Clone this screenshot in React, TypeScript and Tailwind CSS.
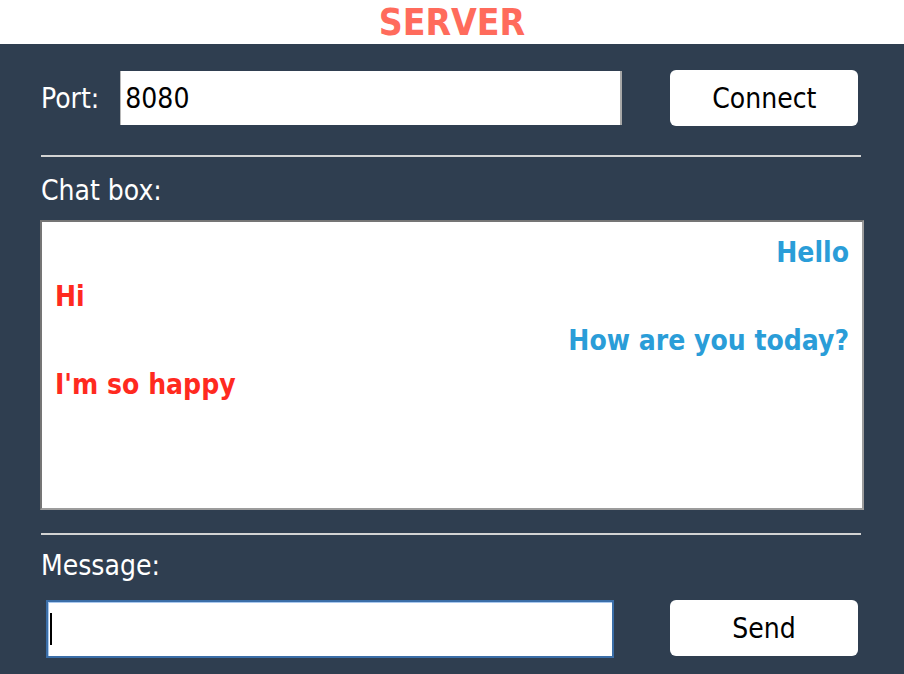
import React from 'react';

type Msg = { id: number; text: string; mine: boolean };

const messages: Msg[] = [
  { id: 1, text: 'Hello', mine: true },
  { id: 2, text: 'Hi', mine: false },
  { id: 3, text: 'How are you today?', mine: true },
  { id: 4, text: "I'm so happy", mine: false },
];

export default function App() {
  return (
    <div className="w-[904px] h-[674px] flex flex-col font-['DejaVu_Sans_Condensed','DejaVu_Sans',sans-serif]">
      {/* Title */}
      <div className="h-[44px] bg-white flex items-center justify-center">
        <h1 className="text-[37px] leading-[44px] pt-[1px] font-bold text-[#ff6b5c]">SERVER</h1>
      </div>

      <div className="flex-1 bg-[#2f3e50] px-[41px] flex flex-col">
        {/* Port row */}
        <div className="mt-[26px] h-[56px] flex items-center">
          <span className="text-white text-[28px] leading-[32px] pt-[2px]">Port:</span>
          <div className="ml-[21px] w-[502px] h-[54px] bg-white border-l border-r-2 border-l-[#b8b8b8] border-r-[#a8a8a8] flex items-center pl-[4px] pt-[2px]">
            <span className="text-black text-[28px] leading-[32px]">8080</span>
          </div>
          <button className="ml-[48px] w-[188px] h-[56px] pt-[2px] bg-white rounded-[6px] text-black text-[28px] leading-[32px]">
            Connect
          </button>
        </div>

        <div className="mt-[29px] h-[2px] w-[820px] bg-[#d3d3d3]" />

        {/* Chat box */}
        <div className="mt-[18px] text-white text-[28px] leading-[32px]">Chat box:</div>
        <div className="mt-[13px] -ml-[1px] w-[824px] h-[290px] bg-white border-2 border-t-[#757575] border-l-[#757575] border-r-[#9c9c9c] border-b-[#9c9c9c] pt-[9px] px-[13px] flex flex-col">
          {messages.map((m) => (
            <div
              key={m.id}
              className={
                m.mine
                  ? 'h-[44px] leading-[44px] text-[28px] font-bold text-right text-[#2a9dd8]'
                  : 'h-[44px] leading-[44px] text-[28px] font-bold text-left text-[#ff2a1f]'
              }
            >
              {m.text}
            </div>
          ))}
        </div>

        <div className="mt-[23px] h-[2px] w-[820px] bg-[#d3d3d3]" />

        {/* Message row */}
        <div className="mt-[15px] text-white text-[28px] leading-[32px]">Message:</div>
        <div className="mt-[18px] flex items-start">
          <div className="ml-[5px] w-[568px] h-[58px] bg-white border-2 border-[#3b6ea8] shadow-[inset_1px_1px_0_#a9c8ee] flex items-center pl-[2px]">
            <div className="w-[2px] h-[32px] bg-black" />
          </div>
          <button className="ml-[56px] w-[188px] h-[56px] pt-[2px] bg-white rounded-[6px] text-black text-[28px] leading-[32px]">
            Send
          </button>
        </div>
      </div>
    </div>
  );
}
